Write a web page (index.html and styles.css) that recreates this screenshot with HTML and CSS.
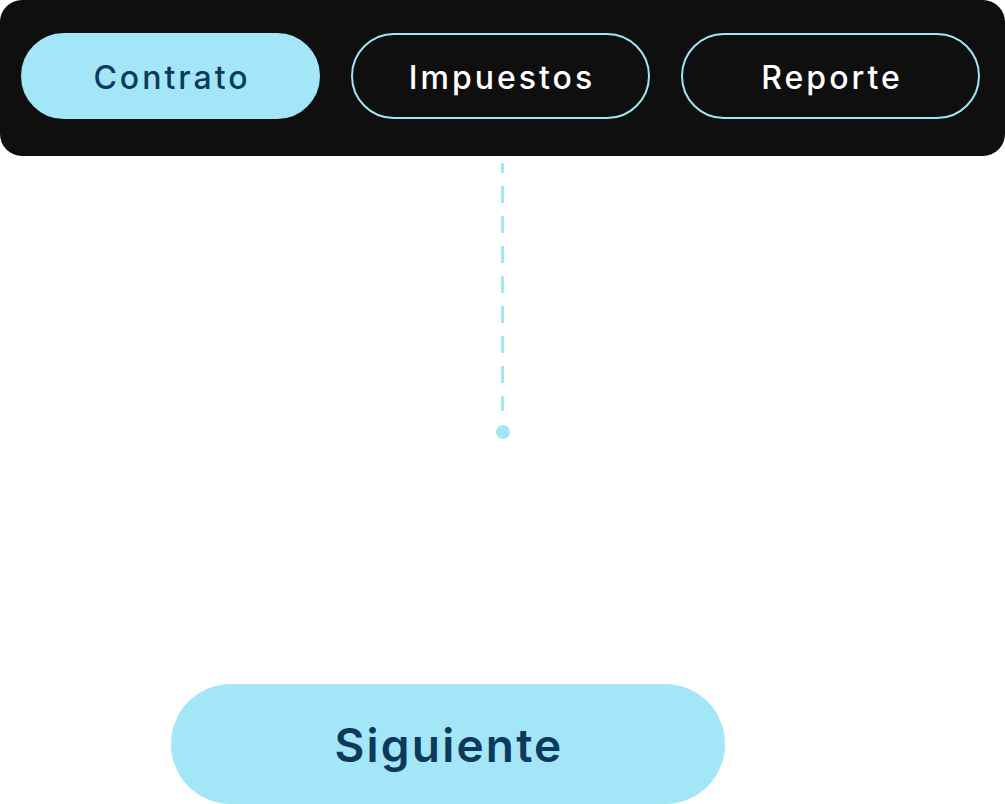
FILE: index.html
```html
<!DOCTYPE html>
<html lang="es">
<head>
<meta charset="utf-8">
<title>Pasos</title>
<link rel="stylesheet" href="styles.css">
</head>
<body>
<nav class="tabs">
  <button class="tab tab-active">Contrato</button>
  <button class="tab">Impuestos</button>
  <button class="tab">Reporte</button>
</nav>
<div class="connector">
  <div class="connector-line"></div>
  <div class="connector-dot"></div>
</div>
<div class="footer">
  <button class="next">Siguiente</button>
</div>
</body>
</html>
```
FILE: styles.css
```css
* { box-sizing: border-box; }
html, body { margin: 0; padding: 0; background: #ffffff; }
body {
  width: 1005px;
  height: 804px;
  overflow: hidden;
  font-family: Inter, "Noto Sans", sans-serif;
}
.tabs {
  display: flex;
  gap: 31px;
  padding: 33px 21px 37px;
  background: #0f0f0f;
  border-radius: 22px;
  height: 156px;
}
.tab {
  width: 299px;
  height: 86px;
  border-radius: 43px;
  border: 2px solid #a2e6f8;
  background: #0f0f0f;
  color: #ffffff;
  font-family: inherit;
  font-size: 32px;
  font-weight: 500;
  padding: 2px 0 0 3px;
  letter-spacing: 3px;
}
.tab-active {
  background: #a2e6f8;
  color: #0d3a5c;
}
.connector {
  display: flex;
  flex-direction: column;
  align-items: center;
  padding-top: 7px;
  gap: 14px;
}
.connector-line {
  width: 3px;
  height: 248px;
  background: repeating-linear-gradient(to bottom, #a2e6f8 0 17px, transparent 17px 30px);
  background-position: 0 -7px;
  border-radius: 1px;
}
.connector-dot {
  width: 14px;
  height: 14px;
  border-radius: 50%;
  background: #a2e6f8;
}
.footer {
  padding-top: 245px;
  padding-left: 171px;
}
.next {
  width: 554px;
  height: 120px;
  border: none;
  border-radius: 60px;
  background: #a2e6f8;
  color: #0d3a5c;
  font-family: inherit;
  font-size: 46px;
  font-weight: 600;
  letter-spacing: 2.2px;
  padding: 2px 0 0 2px;
}
```
